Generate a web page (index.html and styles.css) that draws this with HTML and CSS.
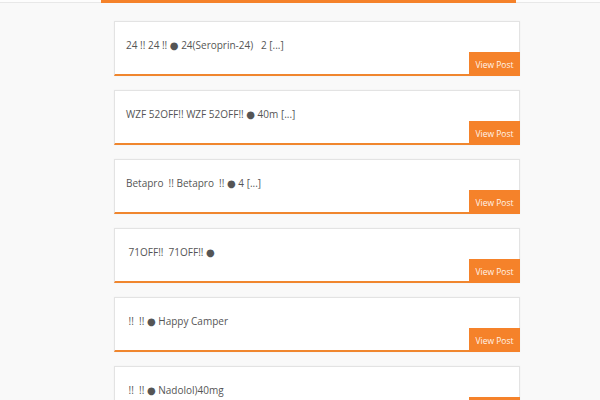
FILE: index.html
```html
<!DOCTYPE html>
<html>
<head>
<meta charset="utf-8">
<link rel="stylesheet" href="styles.css">
</head>
<body>
<div class="topbar"><div class="topbar-accent"></div></div>
<div class="page">
  <main class="list">
    <article class="card"><p class="excerpt">24 !! 24 !! ● 24(Seroprin-24)   2 [...]</p><a class="btn">View Post</a></article>
    <article class="card"><p class="excerpt">WZF 52OFF!! WZF 52OFF!! ● 40m [...]</p><a class="btn">View Post</a></article>
    <article class="card"><p class="excerpt">Betapro  !! Betapro  !! ● 4 [...]</p><a class="btn">View Post</a></article>
    <article class="card"><p class="excerpt"> 71OFF!!  71OFF!! ●</p><a class="btn">View Post</a></article>
    <article class="card"><p class="excerpt"> !!  !! ● Happy Camper</p><a class="btn">View Post</a></article>
    <article class="card"><p class="excerpt"> !!  !! ● Nadolol)40mg</p><a class="btn">View Post</a></article>
  </main>
</div>
</body>
</html>
```
FILE: styles.css
```css
html, body {
  margin: 0;
  padding: 0;
  background: #f9f9f9;
  font-family: "Open Sans", "DejaVu Sans", sans-serif;
}
.topbar {
  height: 2px;
  border-bottom: 1px solid #e8e8e8;
  background: #fdfdfd;
}
.topbar-accent {
  margin-left: 101px;
  width: 415px;
  height: 3px;
  background: #f5822a;
}
.page {
  padding-left: 114px;
  padding-top: 18px;
}
.list {
  width: 406px;
  display: flex;
  flex-direction: column;
  gap: 14px;
}
.card {
  position: relative;
  box-sizing: border-box;
  height: 55px;
  background: #fff;
  border: 1px solid #e3e3e3;
  border-bottom: 2px solid #f0862e;
  box-shadow: 0 0 2px rgba(0,0,0,0.04);
}
.excerpt {
  margin: 0;
  padding: 17px 11px 0;
  font-size: 10px;
  line-height: 13px;
  color: #555;
  white-space: pre;
}
.btn {
  position: absolute;
  right: -1px;
  bottom: -2px;
  width: 51px;
  height: 24px;
  background: #f5822a;
  color: #fff4ec;
  font-size: 8.5px;
  display: flex;
  align-items: center;
  justify-content: center;
}
```
